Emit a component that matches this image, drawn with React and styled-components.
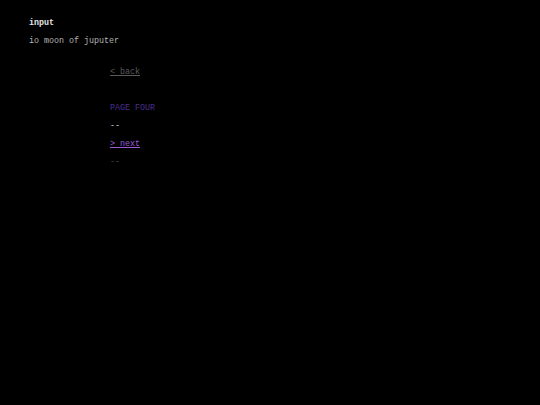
import React from "react";
import styled, { createGlobalStyle } from "styled-components";

const Global = createGlobalStyle`
  html, body { margin: 0; padding: 0; background: #000; }
  body { font-family: "Liberation Mono", "Courier New", monospace; font-size: 8.33px; }
`;

const Page = styled.div`
  padding: 14px 0 0 29px;
  min-height: 391px;
  background: #000;
`;

const Line = styled.div`
  height: 18px;
  line-height: 18px;
  white-space: pre;
  color: ${(p) => p.$color || "#ccc"};
  font-weight: ${(p) => (p.$bold ? "bold" : "normal")};
`;

const Menu = styled.div`
  margin: 13px 0 0 81px;
  display: flex;
  flex-direction: column;
`;

const Link = styled.a`
  color: ${(p) => p.$color};
  text-decoration: underline;
  cursor: pointer;
`;

export default function App() {
  return (
    <>
      <Global />
      <Page>
        <Line $bold $color="#e6e6e6">input</Line>
        <Line $color="#b4b4b4">io moon of juputer</Line>
        <Menu>
          <Line><Link $color="#5a5a5a">&lt; back</Link></Line>
          <Line />
          <Line $color="#4b2f8e">PAGE FOUR</Line>
          <Line $color="#cfcfcf">--</Line>
          <Line><Link $color="#9a5ad8">&gt; next</Link></Line>
          <Line $color="#4a4a4a">--</Line>
        </Menu>
      </Page>
    </>
  );
}
